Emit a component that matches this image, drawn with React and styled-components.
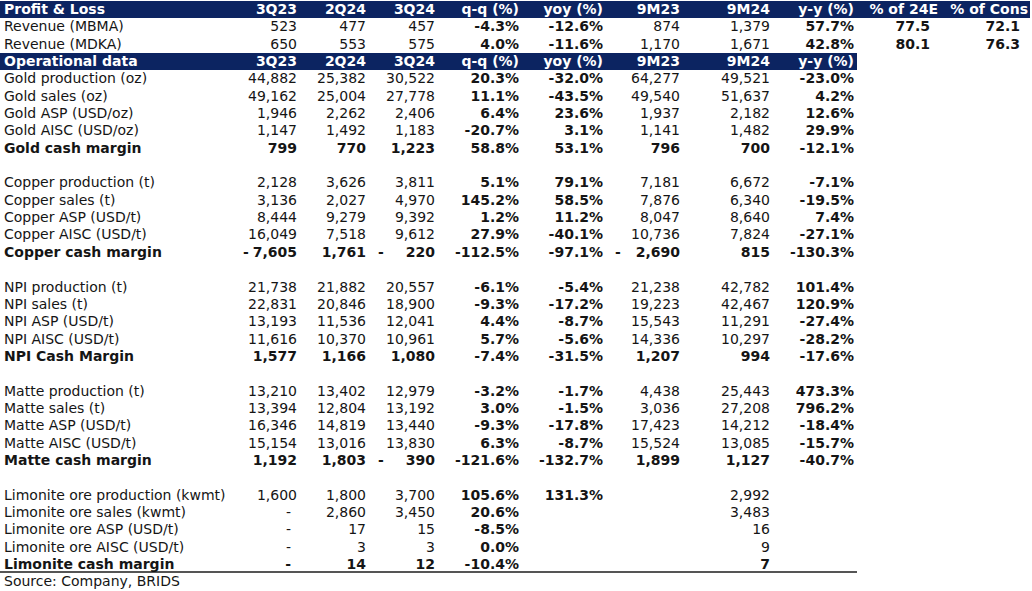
import styled, { createGlobalStyle } from "styled-components";

const GlobalStyle = createGlobalStyle`
  html, body {
    margin: 0;
    padding: 0;
    background: #ffffff;
  }
  body {
    font-family: "DejaVu Sans", Verdana, sans-serif;
    color: #151515;
  }
`;

const COLS = [234, 66, 69, 69, 84, 84, 77, 90, 84, 83, 90];

const Sheet = styled.div`
  padding-top: 1px;
  display: flex;
  flex-direction: column;
  font-size: 14px;
`;

const Row = styled.div`
  display: grid;
  grid-template-columns: ${(p) => COLS.slice(0, p.$cols).map((c) => c + "px").join(" ")};
  width: fit-content;
  height: 17.35px;
  line-height: 17px;
  box-sizing: border-box;
  white-space: nowrap;
  background: ${(p) => (p.$head ? "#0c2461" : "transparent")};
  color: ${(p) => (p.$head ? "#ffffff" : "#151515")};
  font-weight: ${(p) => (p.$head || p.$bold ? 700 : 400)};
  border-bottom: ${(p) => (p.$last ? "2px solid #555" : "none")};
`;

const Label = styled.div`
  padding-left: 4px;
  overflow: visible;
`;

const Cell = styled.div`
  display: flex;
  justify-content: ${(p) => (p.$dash ? "space-between" : "flex-end")};
  padding-right: ${(p) => (p.$pad != null ? p.$pad : 3)}px;
  padding-left: ${(p) => (p.$dash ? 9 : 0)}px;
  font-weight: ${(p) => (p.$bold ? 700 : "inherit")};
`;

const Blank = styled.div`
  height: 17.35px;
`;

const Source = styled.div`
  padding-left: 4px;
  line-height: 17px;
`;

const header = (title, cols) =>
  [title, "3Q23", "2Q24", "3Q24", "q-q (%)", "yoy (%)", "9M23", "9M24", "y-y (%)", "% of 24E", "% of Cons"].slice(0, cols);

const pl = [
  ["Revenue (MBMA)", "523", "477", "457", "-4.3%", "-12.6%", "874", "1,379", "57.7%", "77.5", "72.1"],
  ["Revenue (MDKA)", "650", "553", "575", "4.0%", "-11.6%", "1,170", "1,671", "42.8%", "80.1", "76.3"],
];

const groups = [
  [
    ["Gold production (oz)", "44,882", "25,382", "30,522", "20.3%", "-32.0%", "64,277", "49,521", "-23.0%"],
    ["Gold sales (oz)", "49,162", "25,004", "27,778", "11.1%", "-43.5%", "49,540", "51,637", "4.2%"],
    ["Gold ASP (USD/oz)", "1,946", "2,262", "2,406", "6.4%", "23.6%", "1,937", "2,182", "12.6%"],
    ["Gold AISC (USD/oz)", "1,147", "1,492", "1,183", "-20.7%", "3.1%", "1,141", "1,482", "29.9%"],
    ["Gold cash margin", "799", "770", "1,223", "58.8%", "53.1%", "796", "700", "-12.1%"],
  ],
  [
    ["Copper production (t)", "2,128", "3,626", "3,811", "5.1%", "79.1%", "7,181", "6,672", "-7.1%"],
    ["Copper sales (t)", "3,136", "2,027", "4,970", "145.2%", "58.5%", "7,876", "6,340", "-19.5%"],
    ["Copper ASP (USD/t)", "8,444", "9,279", "9,392", "1.2%", "11.2%", "8,047", "8,640", "7.4%"],
    ["Copper AISC (USD/t)", "16,049", "7,518", "9,612", "27.9%", "-40.1%", "10,736", "7,824", "-27.1%"],
    ["Copper cash margin", "-7,605", "1,761", "-220", "-112.5%", "-97.1%", "-2,690", "815", "-130.3%"],
  ],
  [
    ["NPI production (t)", "21,738", "21,882", "20,557", "-6.1%", "-5.4%", "21,238", "42,782", "101.4%"],
    ["NPI sales (t)", "22,831", "20,846", "18,900", "-9.3%", "-17.2%", "19,223", "42,467", "120.9%"],
    ["NPI ASP (USD/t)", "13,193", "11,536", "12,041", "4.4%", "-8.7%", "15,543", "11,291", "-27.4%"],
    ["NPI AISC (USD/t)", "11,616", "10,370", "10,961", "5.7%", "-5.6%", "14,336", "10,297", "-28.2%"],
    ["NPI Cash Margin", "1,577", "1,166", "1,080", "-7.4%", "-31.5%", "1,207", "994", "-17.6%"],
  ],
  [
    ["Matte production (t)", "13,210", "13,402", "12,979", "-3.2%", "-1.7%", "4,438", "25,443", "473.3%"],
    ["Matte sales (t)", "13,394", "12,804", "13,192", "3.0%", "-1.5%", "3,036", "27,208", "796.2%"],
    ["Matte ASP (USD/t)", "16,346", "14,819", "13,440", "-9.3%", "-17.8%", "17,423", "14,212", "-18.4%"],
    ["Matte AISC (USD/t)", "15,154", "13,016", "13,830", "6.3%", "-8.7%", "15,524", "13,085", "-15.7%"],
    ["Matte cash margin", "1,192", "1,803", "-390", "-121.6%", "-132.7%", "1,899", "1,127", "-40.7%"],
  ],
  [
    ["Limonite ore production (kwmt)", "1,600", "1,800", "3,700", "105.6%", "131.3%", "", "2,992", ""],
    ["Limonite ore sales (kwmt)", "0", "2,860", "3,450", "20.6%", "", "", "3,483", ""],
    ["Limonite ore ASP (USD/t)", "0", "17", "15", "-8.5%", "", "", "16", ""],
    ["Limonite ore AISC (USD/t)", "0", "3", "3", "0.0%", "", "", "9", ""],
    ["Limonite cash margin", "0", "14", "12", "-10.4%", "", "", "7", ""],
  ],
];

// q-q, yoy, y-y and the two "% of" columns are always bold
const BOLD_COLS = [4, 5, 8, 9, 10];
const PCT_COLS = [4, 5, 8];

function Value({ v, idx, rowBold }) {
  const bold = rowBold || BOLD_COLS.includes(idx);
  const numeric = !PCT_COLS.includes(idx) && idx < 9;
  if (numeric && v === "0") {
    return (
      <Cell $bold={bold} $pad={9}>
        -
      </Cell>
    );
  }
  if (numeric && v.startsWith("-")) {
    return (
      <Cell $dash $bold={bold}>
        <span>-</span>
        <span>{v.slice(1)}</span>
      </Cell>
    );
  }
  return (
    <Cell $bold={bold} $pad={idx >= 9 ? 10 : 3}>
      {v}
    </Cell>
  );
}

function DataRow({ cells, bold, last }) {
  const [label, ...vals] = cells;
  return (
    <Row $cols={cells.length} $bold={bold} $last={last}>
      <Label>{label}</Label>
      {vals.map((v, i) => (
        <Value key={i} v={v} idx={i + 1} rowBold={bold} />
      ))}
    </Row>
  );
}

function HeadRow({ title, cols }) {
  const cells = header(title, cols);
  return (
    <Row $head $cols={cols}>
      <Label>{cells[0]}</Label>
      {cells.slice(1).map((c, i) => (
        <Cell key={i} $pad={i + 1 >= 9 ? 2 : 3}>
          {c}
        </Cell>
      ))}
    </Row>
  );
}

export default function App() {
  return (
    <>
      <GlobalStyle />
      <Sheet>
        <HeadRow title="Profit & Loss" cols={11} />
        {pl.map((r) => (
          <DataRow key={r[0]} cells={r} />
        ))}
        <HeadRow title="Operational data" cols={9} />
        {groups.map((g, gi) => (
          <div key={gi}>
            {gi > 0 && <Blank />}
            {g.map((r, ri) => (
              <DataRow
                key={r[0]}
                cells={r}
                bold={ri === 4}
                last={gi === groups.length - 1 && ri === 4}
              />
            ))}
          </div>
        ))}
        <Source>Source: Company, BRIDS</Source>
      </Sheet>
    </>
  );
}
